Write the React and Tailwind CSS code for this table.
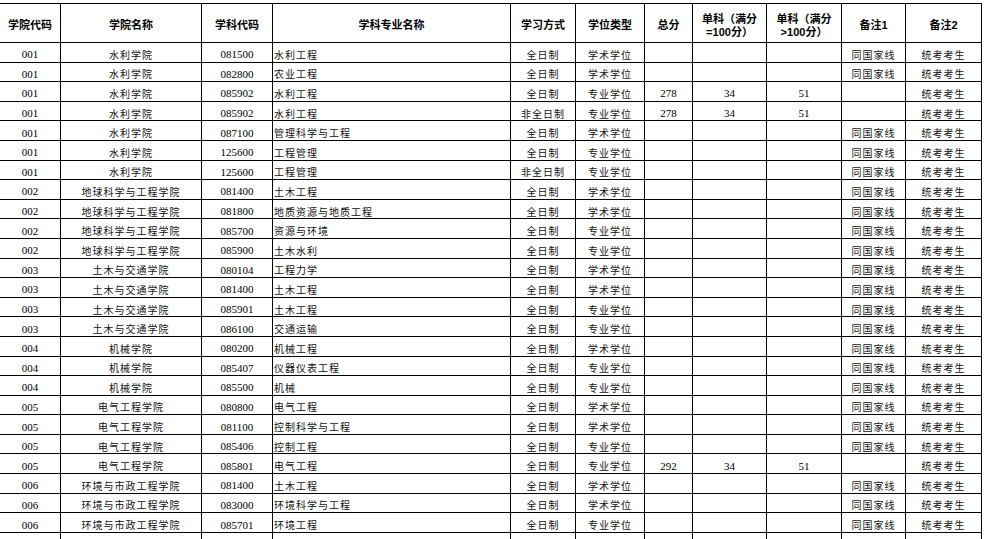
import React from "react";

const G = "grid grid-cols-[61px_141px_71px_238px_65px_69px_48px_74px_75px_64px_76px]";

const rows = [
  ["001", "水利学院", "081500", "水利工程", "全日制", "学术学位", "", "", "", "同国家线", "统考考生"],
  ["001", "水利学院", "082800", "农业工程", "全日制", "学术学位", "", "", "", "同国家线", "统考考生"],
  ["001", "水利学院", "085902", "水利工程", "全日制", "专业学位", "278", "34", "51", "", "统考考生"],
  ["001", "水利学院", "085902", "水利工程", "非全日制", "专业学位", "278", "34", "51", "", "统考考生"],
  ["001", "水利学院", "087100", "管理科学与工程", "全日制", "学术学位", "", "", "", "同国家线", "统考考生"],
  ["001", "水利学院", "125600", "工程管理", "全日制", "专业学位", "", "", "", "同国家线", "统考考生"],
  ["001", "水利学院", "125600", "工程管理", "非全日制", "专业学位", "", "", "", "同国家线", "统考考生"],
  ["002", "地球科学与工程学院", "081400", "土木工程", "全日制", "学术学位", "", "", "", "同国家线", "统考考生"],
  ["002", "地球科学与工程学院", "081800", "地质资源与地质工程", "全日制", "学术学位", "", "", "", "同国家线", "统考考生"],
  ["002", "地球科学与工程学院", "085700", "资源与环境", "全日制", "专业学位", "", "", "", "同国家线", "统考考生"],
  ["002", "地球科学与工程学院", "085900", "土木水利", "全日制", "专业学位", "", "", "", "同国家线", "统考考生"],
  ["003", "土木与交通学院", "080104", "工程力学", "全日制", "学术学位", "", "", "", "同国家线", "统考考生"],
  ["003", "土木与交通学院", "081400", "土木工程", "全日制", "学术学位", "", "", "", "同国家线", "统考考生"],
  ["003", "土木与交通学院", "085901", "土木工程", "全日制", "专业学位", "", "", "", "同国家线", "统考考生"],
  ["003", "土木与交通学院", "086100", "交通运输", "全日制", "专业学位", "", "", "", "同国家线", "统考考生"],
  ["004", "机械学院", "080200", "机械工程", "全日制", "学术学位", "", "", "", "同国家线", "统考考生"],
  ["004", "机械学院", "085407", "仪器仪表工程", "全日制", "专业学位", "", "", "", "同国家线", "统考考生"],
  ["004", "机械学院", "085500", "机械", "全日制", "专业学位", "", "", "", "同国家线", "统考考生"],
  ["005", "电气工程学院", "080800", "电气工程", "全日制", "学术学位", "", "", "", "同国家线", "统考考生"],
  ["005", "电气工程学院", "081100", "控制科学与工程", "全日制", "学术学位", "", "", "", "同国家线", "统考考生"],
  ["005", "电气工程学院", "085406", "控制工程", "全日制", "专业学位", "", "", "", "同国家线", "统考考生"],
  ["005", "电气工程学院", "085801", "电气工程", "全日制", "专业学位", "292", "34", "51", "", "统考考生"],
  ["006", "环境与市政工程学院", "081400", "土木工程", "全日制", "学术学位", "", "", "", "同国家线", "统考考生"],
  ["006", "环境与市政工程学院", "083000", "环境科学与工程", "全日制", "学术学位", "", "", "", "同国家线", "统考考生"],
  ["006", "环境与市政工程学院", "085701", "环境工程", "全日制", "专业学位", "", "", "", "同国家线", "统考考生"],
  ["", "", "", "", "", "", "", "", "", "", ""],
];

const headers = [
  "学院代码",
  "学院名称",
  "学科代码",
  "学科专业名称",
  "学习方式",
  "学位类型",
  "总分",
  "单科（满分 =100分）",
  "单科（满分 >100分）",
  "备注1",
  "备注2",
];

const numCols = new Set([0, 2, 6, 7, 8]);

export default function App() {
  return (
    <div className="w-[987px] h-[539px] overflow-hidden bg-white text-black">
      <div className="mt-[3px] w-[982px]">
        <div className={G}>
          {headers.map((h, i) => (
            <div
              key={i}
              className="h-[40px] border-t border-r border-b border-black flex items-center justify-center text-center pt-[5px] px-[8px] font-bold text-[11px] leading-[13px] [font-family:'Liberation_Sans','Noto_Sans_CJK_SC',sans-serif]"
            >
              {h}
            </div>
          ))}
        </div>
        {rows.map((r, ri) => (
          <div key={ri} className={G}>
            {r.map((c, ci) => (
              <div
                key={ci}
                className={
                  "h-[19.6px] border-r border-b border-black flex items-center whitespace-nowrap overflow-hidden pt-[5px] leading-none " +
                  (ci === 3 ? "justify-start pl-[1px] " : "justify-center ") +
                  (numCols.has(ci)
                    ? "text-[11px] [font-family:'Liberation_Serif',serif]"
                    : "text-[10px] tracking-[1px] text-[#111] [font-family:'Noto_Sans_CJK_SC',sans-serif]")
                }
              >
                {c}
              </div>
            ))}
          </div>
        ))}
      </div>
    </div>
  );
}
